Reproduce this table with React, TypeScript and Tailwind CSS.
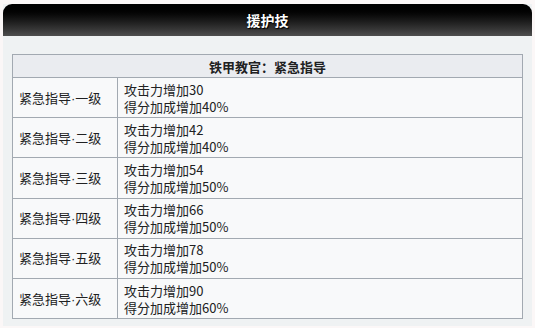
const rows = [
  { name: "一级", atk: "30", score: "40%" },
  { name: "二级", atk: "42", score: "40%" },
  { name: "三级", atk: "54", score: "50%" },
  { name: "四级", atk: "66", score: "50%" },
  { name: "五级", atk: "78", score: "50%" },
  { name: "六级", atk: "90", score: "60%" },
];

export default function App() {
  return (
    <div
      className="w-[535px] h-[328px] bg-[#fbf7f7] pt-[4px] px-[3px] overflow-hidden"
      style={{ fontFamily: '"Noto Sans CJK SC", "Noto Sans", sans-serif' }}
    >
      <div className="w-[529px] h-[322px] bg-[#eff2f3]">
        <div className="h-[32px] rounded-t-[9px] bg-gradient-to-b from-[#000000] to-[#4e4e4e] flex items-center justify-center">
          <span className="text-white text-[14px] font-bold [text-shadow:0_0_2px_#000,1px_1px_1px_#000]">援护技</span>
        </div>
        <div className="pt-[18px] px-[9px]">
          <table className="w-[511px] border-collapse border border-[#a2a9b1] text-[13px] text-[#202122]">
            <thead>
              <tr>
                <th colSpan={2} className="h-[23px] p-0 bg-[#eaecf0] border border-[#a2a9b1] font-bold leading-[17px] text-center">
                  铁甲教官：紧急指导
                </th>
              </tr>
            </thead>
            <tbody>
              {rows.map((r) => (
                <tr key={r.name} className="bg-[#f8f9fa]">
                  <td className="w-[105px] border border-[#a2a9b1] pl-[6px] py-[2.6px] leading-[17px] align-middle">
                    紧急指导<span className="font-['Liberation_Sans']">·</span>{r.name}
                  </td>
                  <td className="border border-[#a2a9b1] pl-[6px] py-[2.6px] leading-[17px]">
                    <div className="h-[17px]">攻击力增加{r.atk}</div>
                    <div className="h-[17px]">得分加成增加{r.score}</div>
                  </td>
                </tr>
              ))}
            </tbody>
          </table>
        </div>
      </div>
    </div>
  );
}
